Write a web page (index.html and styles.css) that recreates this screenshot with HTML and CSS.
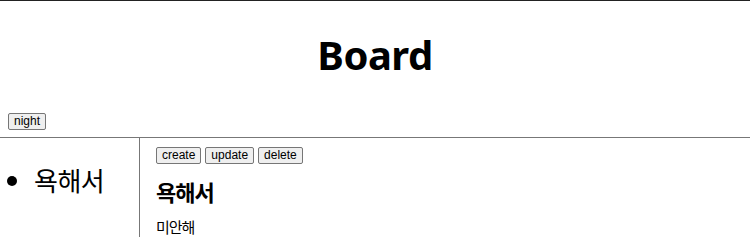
FILE: index.html
```html
<!DOCTYPE html>
<html lang="ko">
<head>
    <meta charset="UTF-8">
    <title>Board</title>
    <link rel="stylesheet" href="styles.css">
</head>
<body>
    <div class="top">
        <h1 class="title">Board</h1>
        <input type="button" class="btn" value="night">
    </div>
    <div class="grid">
        <ul class="list">
            <li>욕해서</li>
        </ul>
        <div class="article">
            <div class="controls">
                <input type="button" class="btn" value="create">
                <input type="button" class="btn" value="update">
                <input type="button" class="btn" value="delete">
            </div>
            <h2 class="subject">욕해서</h2>
            <p class="desc">미안해</p>
        </div>
    </div>
</body>
</html>
```

FILE: styles.css
```css
body {
    margin: 0;
    font-family: "Noto Sans CJK KR", "Noto Sans", sans-serif;
    color: #000;
    background: #fff;
}
.top {
    border-top: 1px solid #222;
    border-bottom: 1px solid #777;
    padding: 0 8px 7px;
}
.title {
    margin: 29px 0 0;
    height: 83px;
    text-align: center;
    font-family: "Noto Sans", sans-serif;
    font-size: 40px;
    line-height: 50px;
    font-weight: bold;
    letter-spacing: -0.5px;
}
.btn {
    font-family: "Liberation Sans", Arial, sans-serif;
    font-size: 12px;
    line-height: 15px;
    height: 17px;
    padding: 0 5px;
    margin: 0;
    border: 1px solid #767676;
    border-radius: 2px;
    background: #efefef;
    color: #000;
    display: block;
}
.grid {
    display: grid;
    grid-template-columns: 140px 1fr;
    height: 99px;
}
.list {
    margin: 0;
    padding: 26px 0 0 34px;
    border-right: 1px solid #777;
    font-size: 26px;
    line-height: 32px;
    letter-spacing: -0.5px;
}
.article {
    padding: 9px 0 0 16px;
}
.controls {
    display: flex;
    gap: 4px;
}
.subject {
    margin: 12px 0 0;
    font-size: 22px;
    line-height: 30px;
    letter-spacing: -1px;
}
.desc {
    margin: 12px 0 0;
    font-size: 15px;
    line-height: 18px;
    letter-spacing: -1px;
}
```
